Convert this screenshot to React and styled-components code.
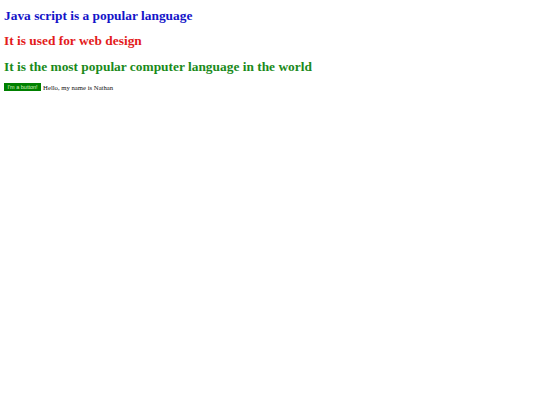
import React from "react";
import { styled, createGlobalStyle } from "styled-components";

const GlobalStyle = createGlobalStyle`
    body {
        margin: 0 4px;
        background: #ffffff;
        font-family: "Liberation Serif", "Times New Roman", serif;
    }
`
const Page = styled.main`
    padding-top: 7.5px;
`
const Heading = styled.h1`
    font-size: 13.4px;
    font-weight: 700;
    line-height: normal;
    margin: 0 0 9.5px;
    color: ${(props) => props.$color};
    &:last-of-type {
        margin-bottom: 8.8px;
    }
`
const Row = styled.p`
    display: flex;
    align-items: center;
    gap: 2px;
    margin: 0;
    font-size: 6.7px;
    color: #111;
`
const Button = styled.button`
    font-family: "Liberation Sans", Arial, sans-serif;
    font-size: 5.5px;
    line-height: 1;
    white-space: nowrap;
    background-color: #008000;
    color: #d8f5c0;
    border: none;
    padding: 1.3px 3.5px;
    height: 8px;
    margin: 0;
`

const App = () => {
    return(
        <Page>
            <GlobalStyle />
            <Heading $color="#1414c8">Java script is a popular language</Heading>
            <Heading $color="#e31b1b">It is used for web design</Heading>
            <Heading $color="#1a8a1a">It is the most popular computer language in the world</Heading>
            <Row><Button>I'm a button!</Button>Hello, my name is Nathan</Row>
        </Page>
    )
}

export default App;
